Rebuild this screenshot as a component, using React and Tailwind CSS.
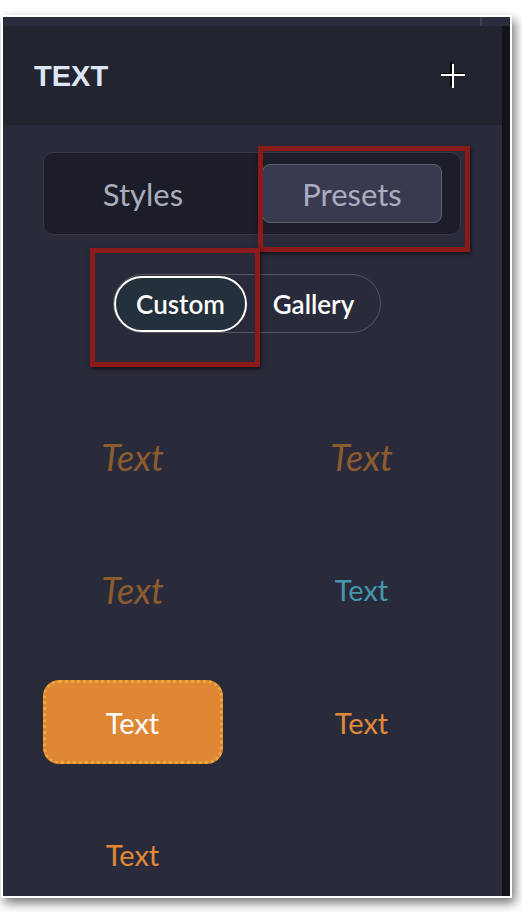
export default function App() {
  const lato = { fontFamily: "Lato, 'Noto Sans', sans-serif" };
  return (
    <div className="relative w-[522px] h-[914px] bg-white pt-[15px] pl-[1px] overflow-hidden" style={lato}>
      <div className="w-[511px] h-[883px] border-2 border-white shadow-[3px_5px_10px_rgba(0,0,0,0.55)] flex flex-col bg-[#2a2b3a] overflow-hidden">
        {/* top strip */}
        <div className="h-[9px] shrink-0 bg-[#2a2d3c] flex">
          <div className="w-[477px]" />
          <div className="w-[2px] bg-[#3d4050]" />
        </div>
        <div className="flex-1 flex min-h-0 overflow-hidden">
          <div className="flex-1 flex flex-col overflow-hidden">
            {/* header */}
            <div className="h-[99px] shrink-0 bg-[#22242f] flex items-center justify-between pl-[31px] pr-[34px]">
              <span className="text-[29px] font-bold text-[#dde6f5] leading-none mt-[2px]" style={{ fontFamily: "'Liberation Sans', Arial, sans-serif" }}>TEXT</span>
              <svg width="28" height="28" viewBox="0 0 28 28">
                <rect x="10" y="0" width="2" height="24" fill="#000" />
                <rect x="1" y="11" width="24" height="2" fill="#000" />
                <rect x="12" y="2" width="2" height="24" fill="#fff" />
                <rect x="1" y="12" width="24" height="2" fill="#fff" />
                <rect x="10" y="0" width="2" height="12" fill="#000" />
              </svg>
            </div>
            {/* segmented */}
            <div className="shrink-0 mt-[27px] ml-[40px] w-[418px] h-[83px] rounded-[10px] border border-[#363848] bg-[#1c1d29] flex items-center">
              <div className="w-[198px] text-center text-[31px] text-[#a9adbd] leading-none pt-[2px]">Styles</div>
              <div className="ml-[20px] w-[180px] h-[59px] rounded-[8px] border border-[#566174] bg-[#393a4f] flex items-center justify-center text-[31px] text-[#a9adc0] leading-none pt-[2px]">Presets</div>
            </div>
            {/* pill */}
            <div className="shrink-0 mt-[39px] ml-[110px] w-[268px] h-[59px] rounded-full border border-[#55575f] flex items-center">
              <div className="w-[133px] h-[56px] rounded-full border-2 border-white bg-[#24303b] flex items-center justify-center text-[26px] font-semibold text-white leading-none">Custom</div>
              <div className="flex-1 text-center text-[26px] font-semibold text-white leading-none">Gallery</div>
            </div>
            {/* grid */}
            <div className="shrink-0 mt-[59px] pl-[15px] grid grid-cols-[229px_229px] auto-rows-[132px]">
              <div className="flex items-center justify-center">
                <span className="italic text-[36px] text-[#8d5b30] leading-none mb-[2px]">Text</span>
              </div>
              <div className="flex items-center justify-center">
                <span className="italic text-[36px] text-[#8d5b30] leading-none mb-[2px]">Text</span>
              </div>
              <div className="flex items-center justify-center">
                <span className="italic text-[36px] text-[#8d5b30] leading-none">Text</span>
              </div>
              <div className="flex items-center justify-center">
                <span className="text-[29px] text-[#4597b0] leading-none mb-[2px]">Text</span>
              </div>
              <div className="flex items-center justify-center">
                <div className="w-[180px] h-[84px] rounded-[16px] bg-[#e08735] border-[3px] border-dotted border-[#ecaa38] flex items-center justify-center">
                  <span className="text-[29px] text-white leading-none">Text</span>
                </div>
              </div>
              <div className="flex items-center justify-center">
                <span className="text-[29px] text-[#e08a38] leading-none">Text</span>
              </div>
              <div className="flex items-center justify-center">
                <span className="text-[29px] text-[#e08a38] leading-none">Text</span>
              </div>
              <div />
            </div>
          </div>
          <div className="w-[8px] shrink-0 bg-[#121318]" />
        </div>
      </div>
      {/* annotation rectangles */}
      <div className="absolute left-[258px] top-[146px] w-[212px] h-[106px] border-[5px] border-[#8b1a1a] shadow-[1px_2px_4px_rgba(0,0,0,0.6)]" />
      <div className="absolute left-[90px] top-[248px] w-[170px] h-[119px] border-[5px] border-[#8b1a1a] shadow-[1px_2px_4px_rgba(0,0,0,0.6)]" />
    </div>
  );
}
